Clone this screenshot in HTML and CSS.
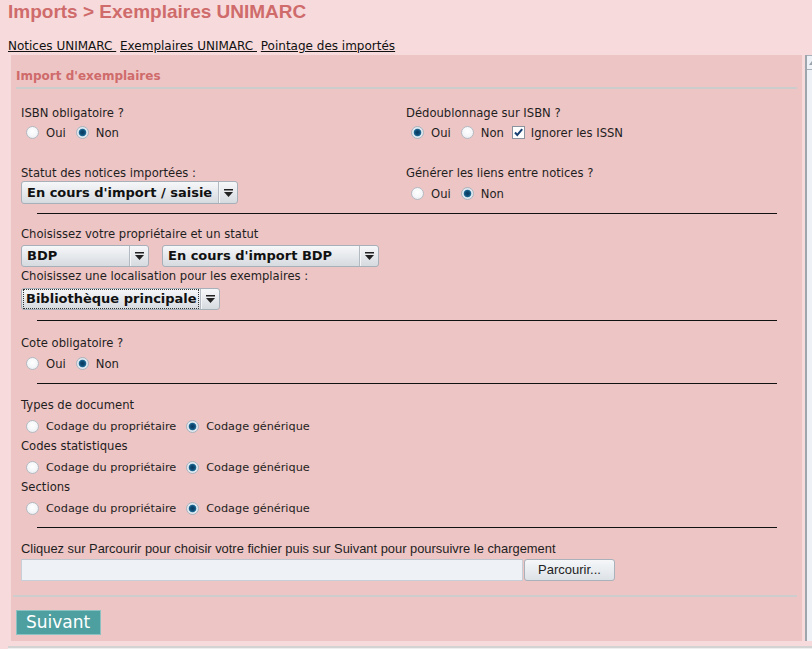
FILE: index.html
```html
<!DOCTYPE html>
<html lang="fr">
<head>
<meta charset="utf-8">
<title>Imports &gt; Exemplaires UNIMARC</title>
<link rel="stylesheet" href="styles.css">
</head>
<body>
<h1 class="title">Imports &gt; Exemplaires UNIMARC</h1>
<nav class="tabs"><a href="#">Notices UNIMARC </a> <a href="#">Exemplaires UNIMARC </a> <a href="#">Pointage des importés</a></nav>
<div class="main">
  <div class="panel">
    <h2 class="panel-title">Import d'exemplaires</h2>
    <div class="form">
      <div class="grid">
        <div class="cell">
          <div class="lbl">ISBN obligatoire ?</div>
          <div class="radios r1">
            <label class="opt"><input type="radio" class="radio" name="isbn">Oui</label>
            <label class="opt"><input type="radio" class="radio" name="isbn" checked>Non</label>
          </div>
        </div>
        <div class="cell">
          <div class="lbl">Dédoublonnage sur ISBN ?</div>
          <div class="radios r1">
            <label class="opt"><input type="radio" class="radio" name="dedup" checked>Oui</label>
            <label class="opt"><input type="radio" class="radio" name="dedup">Non</label>
            <label class="opt"><span class="check"><svg width="13" height="13" viewBox="0 0 13 13"><rect x="0.5" y="0.5" width="12" height="12" fill="#fff" stroke="#8b949e"/><path d="M3 6.5 L5.3 9 L10.2 3.2" fill="none" stroke="#173f72" stroke-width="2"/></svg></span>Ignorer les ISSN</label>
          </div>
        </div>
        <div class="cell">
          <div class="lbl">Statut des notices importées :</div>
          <div class="select w217"><span class="val">En cours d'import / saisie</span><span class="arrow"><svg width="9" height="8" viewBox="0 0 9 8"><rect x="0" y="0" width="9" height="1.5" fill="#222"/><path d="M0 3 H9 L4.5 8 Z" fill="#222"/></svg></span></div>
        </div>
        <div class="cell">
          <div class="lbl">Générer les liens entre notices ?</div>
          <div class="radios r2">
            <label class="opt"><input type="radio" class="radio" name="liens">Oui</label>
            <label class="opt"><input type="radio" class="radio" name="liens" checked>Non</label>
          </div>
        </div>
      </div>

      <hr class="sep">

      <div class="lbl">Choisissez votre propriétaire et un statut</div>
      <div class="sel-row">
        <div class="select w128"><span class="val">BDP</span><span class="arrow"><svg width="9" height="8" viewBox="0 0 9 8"><rect x="0" y="0" width="9" height="1.5" fill="#222"/><path d="M0 3 H9 L4.5 8 Z" fill="#222"/></svg></span></div>
        <div class="select w217"><span class="val">En cours d'import BDP</span><span class="arrow"><svg width="9" height="8" viewBox="0 0 9 8"><rect x="0" y="0" width="9" height="1.5" fill="#222"/><path d="M0 3 H9 L4.5 8 Z" fill="#222"/></svg></span></div>
      </div>
      <div class="lbl mt1">Choisissez une localisation pour les exemplaires :</div>
      <div class="sel-row2">
        <div class="select w199 focus"><span class="val">Bibliothèque principale</span><span class="arrow"><svg width="9" height="8" viewBox="0 0 9 8"><rect x="0" y="0" width="9" height="1.5" fill="#222"/><path d="M0 3 H9 L4.5 8 Z" fill="#222"/></svg></span></div>
      </div>

      <hr class="sep">

      <div class="lbl mt2">Cote obligatoire ?</div>
      <div class="radios r2">
        <label class="opt"><input type="radio" class="radio" name="cote">Oui</label>
        <label class="opt"><input type="radio" class="radio" name="cote" checked>Non</label>
      </div>

      <hr class="sep">

      <div class="lbl mt1">Types de document</div>
      <div class="radios r3">
        <label class="opt"><input type="radio" class="radio" name="types">Codage du propriétaire</label>
        <label class="opt"><input type="radio" class="radio" name="types" checked>Codage générique</label>
      </div>
      <div class="lbl mt1">Codes statistiques</div>
      <div class="radios r3">
        <label class="opt"><input type="radio" class="radio" name="codes">Codage du propriétaire</label>
        <label class="opt"><input type="radio" class="radio" name="codes" checked>Codage générique</label>
      </div>
      <div class="lbl mt1">Sections</div>
      <div class="radios r3">
        <label class="opt"><input type="radio" class="radio" name="sections">Codage du propriétaire</label>
        <label class="opt"><input type="radio" class="radio" name="sections" checked>Codage générique</label>
      </div>

      <hr class="sep sep-last">

      <div class="lbl file-lbl">Cliquez sur Parcourir pour choisir votre fichier puis sur Suivant pour poursuivre le chargement</div>
      <div class="file-row">
        <span class="file-field"></span><button class="browse" type="button">Parcourir...</button>
      </div>
    </div>
    <div class="foot-rule"></div>
    <div class="actions"><button class="btn-next" type="button">Suivant</button></div>
  </div>
  <div class="vscroll"><div class="vscroll-up"><svg width="6" height="4" viewBox="0 0 6 4"><path d="M0 4 L3 0 L6 4 Z" fill="#9aa2ac"/></svg></div></div>
</div>
<div class="hscroll"></div>
</body>
</html>
```

FILE: styles.css
```css
html, body {
  margin: 0;
  height: 649px;
  overflow: hidden;
}

body {
  padding-left: 8px;
  background: #f7dbdc;
  font-family: "DejaVu Sans", "Noto Sans", sans-serif;
  font-size: 11.6px;
  color: #1e1e1e;
}

.title {
  margin: 0;
  padding-top: 1px;
  font: bold 19px/22px "Liberation Sans", Arial, sans-serif;
  color: #cf6b6b;
}

.tabs {
  margin-top: 15px;
  font-size: 12px;
  line-height: 16px;
  white-space: pre;
}

.tabs a {
  color: #111;
  text-decoration: underline;
}

.main {
  display: flex;
  margin-top: 1px;
  margin-left: 3px;
}

.panel {
  flex: none;
  width: 791px;
  box-sizing: border-box;
  background: #eec5c5;
  padding: 13px 5px 6px 5px;
  display: flex;
  flex-direction: column;
}

.panel-title {
  margin: 0;
  font: bold 12px/16px "DejaVu Sans", sans-serif;
  color: #cf6b6b;
  padding-bottom: 3px;
  border-bottom: 2px solid #cccccc;
}

.form {
  padding: 16px 5px 0 5px;
  display: flex;
  flex-direction: column;
  align-items: flex-start;
}

.grid {
  align-self: stretch;
  display: grid;
  grid-template-columns: 385px 1fr;
  row-gap: 22px;
}

.lbl {
  line-height: 16px;
  white-space: nowrap;
}

.mt1 { margin-top: 1px; }
.mt2 { margin-top: 2px; }

.radios {
  display: flex;
  align-items: center;
  height: 21px;
  white-space: nowrap;
}

.r1 { margin-top: 1px; }
.r2 { margin-top: 2px; }
.r3 { margin-top: 3px; font-size: 11.25px; }

.opt {
  display: inline-flex;
  align-items: center;
  margin-right: 5px;
}

.radio {
  appearance: none;
  -webkit-appearance: none;
  box-sizing: border-box;
  width: 13px;
  height: 13px;
  margin: 0 7px 0 5px;
  border-radius: 50%;
  border: 1px solid #b4bbc2;
  background: radial-gradient(circle at 50% 40%, #ffffff 0, #f4f6f8 55%, #dfe4e9 100%);
}

.radio:checked {
  border-color: #a9b4be;
  background: radial-gradient(circle at 50% 50%, #083a5e 0, #0d4a74 2px, #1d6a94 3.4px, #dde6ee 4.2px, #e8eef3 100%);
}

.check {
  display: inline-flex;
  width: 13px;
  height: 13px;
  margin: 0 6px 0 3px;
}

.select {
  display: inline-flex;
  box-sizing: border-box;
  height: 23px;
  border: 1px solid #a7afb8;
  border-radius: 3px;
  background: linear-gradient(#f6f7f9, #d6dbe0);
  font: bold 13px/21px "DejaVu Sans", sans-serif;
  color: #111;
  white-space: nowrap;
}

.select .val {
  flex: 1;
  padding-left: 5px;
  overflow: hidden;
}

.select .arrow {
  flex: none;
  width: 18px;
  display: flex;
  align-items: center;
  justify-content: center;
  border-left: 1px solid #b3bac2;
  box-shadow: inset 1px 0 0 #f4f6f8;
}

.w217 { width: 217px; }
.w128 { width: 128px; }
.w199 { width: 199px; height: 22px; line-height: 20px; }

.focus .val {
  padding-left: 3px;
  margin: 0 1px;
  outline: 1px dotted #333;
  outline-offset: -1px;
}

.sel-row {
  display: flex;
  gap: 13px;
  margin-top: 3px;
}

.sel-row .select { height: 22px; line-height: 20px; }

.sel-row2 {
  display: flex;
  margin-top: 4px;
  margin-bottom: 1px;
}

.sep {
  align-self: center;
  width: 740px;
  height: 0;
  margin: 9px 0 12px 0;
  border: 0;
  border-top: 1px solid #111;
}

.sep-last {
  margin-top: 8px;
  margin-bottom: 13px;
}

.file-lbl {
  font-family: "Liberation Sans", Arial, sans-serif;
  font-size: 12.9px;
}

.file-row {
  display: flex;
  margin-top: 2px;
  height: 22px;
}

.file-field {
  box-sizing: border-box;
  width: 502px;
  height: 22px;
  background: #eef2f7;
  border: 1px solid #c8ced5;
  border-top-color: #bfc6ce;
}

.browse {
  box-sizing: border-box;
  width: 91px;
  height: 22px;
  margin: 0 0 0 1px;
  padding: 0;
  border: 1px solid #a9b1ba;
  border-radius: 3px;
  background: linear-gradient(#f5f7f9, #dde2e7);
  font: 13px/20px "Liberation Sans", Arial, sans-serif;
  color: #222;
}

.foot-rule {
  margin: 14px 0 0 -3px;
  border-top: 2px solid #cdcdcd;
}

.actions {
  margin-top: 13px;
}

.btn-next {
  box-sizing: border-box;
  height: 25px;
  padding: 0 10px 0 9px;
  border: 1px solid #8cc1c1;
  background: #4e9fa0;
  color: #ffffff;
  font: 17px/23px "DejaVu Sans", sans-serif;
}

.vscroll {
  flex: none;
  width: 20px;
  margin-left: 3px;
  box-sizing: border-box;
  border-left: 2px solid #9fa5ad;
  background: #eef1f6;
}

.vscroll-up {
  height: 13px;
  border-bottom: 1px solid #a8b0b9;
  border-top: 1px solid #a8b0b9;
  display: flex;
  align-items: center;
  padding-left: 2px;
}

.hscroll {
  margin-top: 5px;
  height: 3px;
  border-top: 2px solid #d3d3d3;
  background: #efefef;
}
```
